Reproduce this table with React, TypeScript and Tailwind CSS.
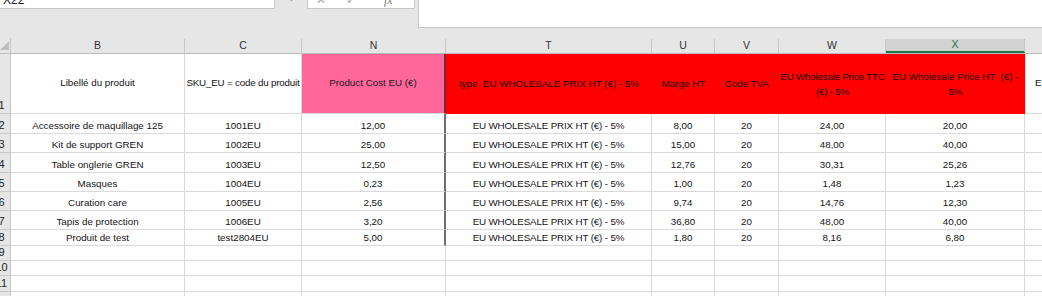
import React from 'react';

const cols = [
  { key: 'B', w: 'w-[174px]' },
  { key: 'C', w: 'w-[117px]' },
  { key: 'N', w: 'w-[144px]' },
  { key: 'T', w: 'w-[206px]' },
  { key: 'U', w: 'w-[63px]' },
  { key: 'V', w: 'w-[64px]' },
  { key: 'W', w: 'w-[107px]' },
  { key: 'X', w: 'w-[139px]' },
];

const wholesale = 'EU WHOLESALE PRIX HT (€) - 5%';

const rows: { n: number; h: string; cells: string[] }[] = [
  { n: 2, h: 'h-[20px]', cells: ['Accessoire de maquillage 125', '1001EU', '12,00', wholesale, '8,00', '20', '24,00', '20,00'] },
  { n: 3, h: 'h-[19px]', cells: ['Kit de support GREN', '1002EU', '25,00', wholesale, '15,00', '20', '48,00', '40,00'] },
  { n: 4, h: 'h-[20px]', cells: ['Table onglerie GREN', '1003EU', '12,50', wholesale, '12,76', '20', '30,31', '25,26'] },
  { n: 5, h: 'h-[19px]', cells: ['Masques', '1004EU', '0,23', wholesale, '1,00', '20', '1,48', '1,23'] },
  { n: 6, h: 'h-[19px]', cells: ['Curation care', '1005EU', '2,56', wholesale, '9,74', '20', '14,76', '12,30'] },
  { n: 7, h: 'h-[19px]', cells: ['Tapis de protection', '1006EU', '3,20', wholesale, '36,80', '20', '48,00', '40,00'] },
  { n: 8, h: 'h-[16px]', cells: ['Produit de test', 'test2804EU', '5,00', wholesale, '1,80', '20', '8,16', '6,80'] },
];

const emptyRows = [
  { n: 9, h: 'h-[15px]' },
  { n: 10, h: 'h-[15px]' },
  { n: 11, h: 'h-[16px]' },
  { n: 12, h: 'h-[20px]' },
];

// row number cell: the row header is scrolled, so digits are clipped on the left
const RowNum = ({ n }: { n: number }) => (
  <div className="w-[11px] shrink-0 overflow-hidden bg-[#e6e6e6] border-r border-b border-[#c8c8c8] flex items-end pb-[1px]">
    <div className="w-[27px] -ml-[12px] shrink-0 text-center text-[11px] leading-[13px] text-[#222]">{n}</div>
  </div>
);

export default function App() {
  return (
    <div className="w-[1042px] h-[296px] overflow-hidden bg-white font-['Liberation_Sans',Arial,sans-serif] text-[9.8px] text-[#141414]">
      {/* formula bar strip */}
      <div className="h-[38px] bg-[#e6e6e6] flex items-start">
        <div className="w-[275px] h-[9px] bg-white border-r border-b border-[#c6c6c6] overflow-hidden">
          <div className="-mt-[7px] pl-[3px] text-[12px] leading-[14px] text-[#222]">X22</div>
        </div>
        <div className="w-[32px] h-[3px] overflow-hidden flex justify-center">
          <div className="-mt-[9px] text-[11px] leading-[12px] text-[#888]">⋮</div>
        </div>
        <div className="w-[108px] h-[9px] bg-white border-r border-b border-l border-[#c6c6c6] overflow-hidden flex items-start">
          <div className="-mt-[7px] w-[26px] pl-[8px] text-[12px] leading-[14px] text-[#aaa]">✕</div>
          <div className="-mt-[7px] w-[30px] pl-[12px] text-[12px] leading-[14px] text-[#aaa]">✓</div>
          <div className="-mt-[7px] flex-1 pl-[20px] text-[12px] leading-[14px] italic text-[#777] font-['Liberation_Serif',serif]">fx</div>
        </div>
        <div className="flex-1 ml-[3px] h-[28px] bg-white border-l border-b border-[#c6c6c6]" />
      </div>

      {/* column letters */}
      <div className="h-[16px] flex bg-[#e6e6e6] border-b border-[#bcbcbc]">
        <div className="w-[11px] shrink-0 flex items-end justify-start border-r border-[#c6c6c6]">
          <svg width="10" height="10" viewBox="0 0 10 10" className="mb-[2px]">
            <polygon points="0,9 9,0 9,9" fill="#bdbdbd" />
          </svg>
        </div>
        {cols.map((c) =>
          c.key === 'X' ? (
            <div key={c.key} className={`${c.w} shrink-0 mt-[1px] bg-[#d2d2d2] border-r border-[#c6c6c6] border-b-2 border-b-[#217346] flex items-center justify-center text-[10.5px] text-[#217346]`}>
              {c.key}
            </div>
          ) : (
            <div key={c.key} className={`${c.w} shrink-0 mt-[1px] border-r border-[#c8c8c8] flex items-center justify-center text-[10.5px] text-[#333]`}>
              {c.key}
            </div>
          )
        )}
        <div className="flex-1" />
      </div>

      {/* row 1: headers */}
      <div className="h-[60px] flex">
        <div className="w-[11px] shrink-0 overflow-hidden bg-[#e6e6e6] border-r border-b border-[#c8c8c8] flex items-end pb-[1px]">
          <div className="w-[27px] -ml-[12px] shrink-0 text-center text-[11px] leading-[13px] text-[#222]">1</div>
        </div>
        <div className="w-[174px] shrink-0 border-r border-b border-[#dadada] flex items-center justify-center">Libellé du produit</div>
        <div className="w-[117px] shrink-0 border-r border-b border-[#dadada] flex items-center justify-center whitespace-nowrap tracking-[-0.2px]">SKU_EU = code du produit</div>
        <div className="w-[144px] shrink-0 bg-[#ff6699] border-r-2 border-r-[#7a2a2a] border-b border-b-[#dadada] flex items-center justify-center text-[#1a1a1a]">Product Cost EU (€)</div>
        <div className="w-[206px] shrink-0 bg-[#ff0000] flex items-center justify-center whitespace-pre text-[#1a0000]">type  EU WHOLESALE PRIX HT (€) - 5%</div>
        <div className="w-[63px] shrink-0 bg-[#ff0000] flex items-center justify-center text-[#1a0000]">Marge HT</div>
        <div className="w-[64px] shrink-0 bg-[#ff0000] flex items-center justify-center text-[#1a0000]">Code TVA</div>
        <div className="w-[107px] shrink-0 bg-[#ff0000] flex items-center justify-center text-center leading-[15px] whitespace-nowrap tracking-[-0.2px] text-[#1a0000]">
          <span>EU Wholesale Price TTC<br />(€) - 5%</span>
        </div>
        <div className="w-[139px] shrink-0 bg-[#ff0000] flex items-center justify-center text-center leading-[15px] whitespace-pre text-[#1a0000]">
          <span>EU Wholesale Price HT  (€) -<br />5%</span>
        </div>
        <div className="flex-1 border-l border-b border-[#dadada] overflow-hidden flex items-center pl-[9px]">
          <span className="whitespace-nowrap">EU Wholesale</span>
        </div>
      </div>

      {/* data rows */}
      {rows.map((r) => (
        <div key={r.n} className={`${r.h} flex`}>
          <RowNum n={r.n} />
          {r.cells.map((v, i) => (
            <div
              key={i}
              className={`${cols[i].w} shrink-0 border-b border-[#dadada] flex items-end justify-center pb-[1px] leading-[13px] whitespace-nowrap ${
                i === 2 ? 'border-r-2 border-r-[#6e6e6e]' : 'border-r'
              } ${i === 3 ? 'tracking-[-0.15px]' : ''}`}
            >
              {v}
            </div>
          ))}
          <div className="flex-1 border-b border-[#dadada]" />
        </div>
      ))}

      {emptyRows.map((r) => (
        <div key={r.n} className={`${r.h} flex`}>
          <RowNum n={r.n} />
          {cols.map((c) => (
            <div key={c.key} className={`${c.w} shrink-0 border-r border-b border-[#dadada]`} />
          ))}
          <div className="flex-1 border-b border-[#dadada]" />
        </div>
      ))}
    </div>
  );
}
